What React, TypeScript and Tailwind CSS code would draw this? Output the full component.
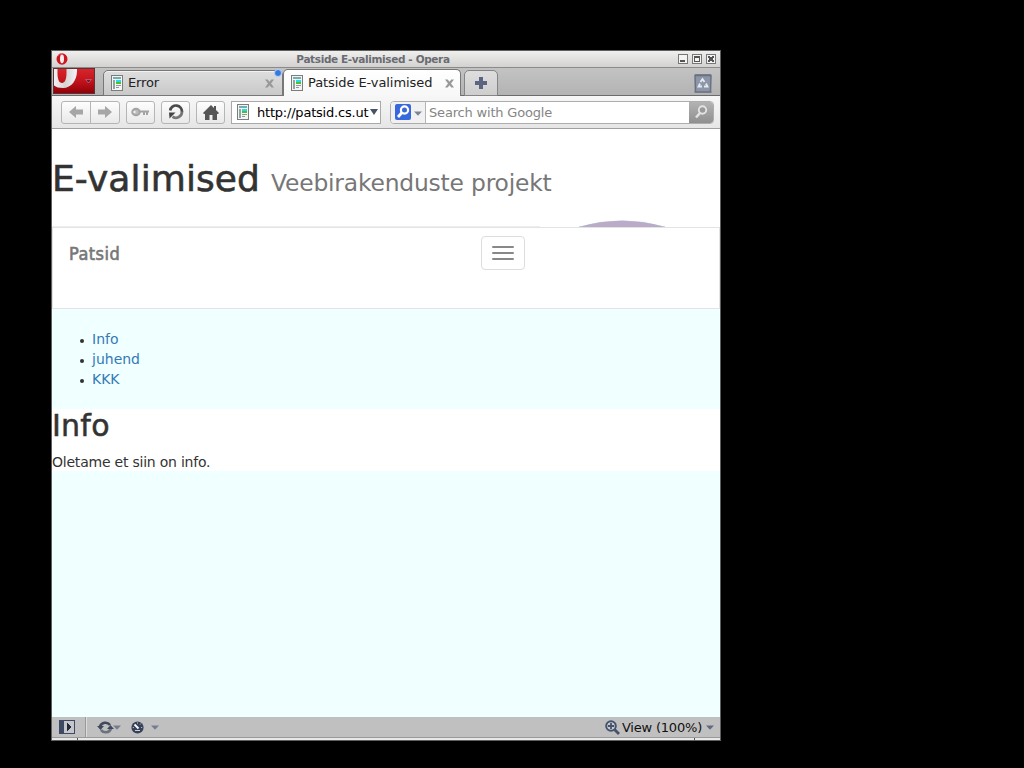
import type { ReactNode } from "react";

function PageIcon() {
  return (
    <svg width="12" height="16" viewBox="0 0 12 16" shapeRendering="crispEdges" className="shrink-0">
      <rect x="0.5" y="0.5" width="11" height="15" fill="#f4f4f4" stroke="#7c7c7c" />
      <rect x="2" y="2" width="8" height="2" fill="#6fb0b0" />
      <rect x="2" y="5" width="2" height="9" fill="#8fa5a0" />
      <rect x="5" y="5" width="5" height="2" fill="#22dcea" />
      <rect x="5" y="7" width="5" height="2" fill="#55bb35" />
      <path d="M5 10.500h5M5 12.500h3" stroke="#8a9a9a" />
    </svg>
  );
}

function Caret({ color = "#5a6378" }: { color?: string }) {
  return (
    <svg width="8" height="5" viewBox="0 0 8 5" className="shrink-0">
      <path d="M0 0.5h8L4 4.8z" fill={color} />
    </svg>
  );
}

function CloseMark() {
  return (
    <svg width="9" height="9" viewBox="0 0 9 9" className="shrink-0">
      <path d="M0 0.5h2.7l1.8 2.3 1.8-2.3H9L6 4.5l3 4H6.3L4.5 6.2 2.7 8.5H0l3-4z" fill="#989898" />
    </svg>
  );
}

function WinButton({ children }: { children: ReactNode }) {
  return (
    <svg width="10" height="10" viewBox="0 0 10 10" shapeRendering="crispEdges">
      <rect x="0.5" y="0.5" width="9" height="9" fill="#f4f4f2" stroke="#777" />
      {children}
    </svg>
  );
}

const toolButton =
  "flex h-[23px] shrink-0 items-center justify-center rounded-[3px] border border-[#b5b5b5] bg-gradient-to-b from-[#fdfdfd] to-[#e9e9e9]";

function TitleBar() {
  return (
    <div className="flex h-[17px] items-center border-b border-[#8b8b8b] bg-gradient-to-b from-[#efefed] to-[#d3d2d0] px-1">
      <svg width="12" height="12" viewBox="0 0 12 12" className="shrink-0">
        <ellipse cx="6" cy="6" rx="5.5" ry="5.8" fill="#cf1620" />
        <ellipse cx="6" cy="5.8" rx="2" ry="4.4" fill="#f6eeee" />
        <path d="M2 2.5Q3.5.5 6 .5" stroke="#f07070" fill="none" />
      </svg>
      <div className="flex-1 text-center text-[10.5px] font-bold leading-[14px] tracking-[-0.37px] text-[#696c72]">
        Patside E-valimised - Opera
      </div>
      <div className="flex gap-1">
        <WinButton><rect x="2" y="6" width="5" height="2" fill="#555" /></WinButton>
        <WinButton><path d="M2.5 3.5h5v4h-5zM2 2.5h6" fill="none" stroke="#555" /></WinButton>
        <WinButton><path d="M2 2h2v1h2V2h2v2H7v2h1v2H6V7H4v1H2V6h1V4H2z" fill="#555" /></WinButton>
      </div>
    </div>
  );
}

function TabBar() {
  return (
    <div className="flex h-7 items-start border-b border-[#6b6b6b] bg-gradient-to-b from-[#c3c3c3] to-[#b3b3b3] pl-px">
      <svg width="42" height="26" viewBox="0 0 42 26" className="shrink-0">
        <defs>
          <linearGradient id="red" x2="0" y2="1">
            <stop stopColor="#d9252c" />
            <stop offset="0.5" stopColor="#c3131c" />
            <stop offset="1" stopColor="#8f0008" />
          </linearGradient>
          <linearGradient id="silver" x2="1" y2="0">
            <stop stopColor="#f2f2f2" />
            <stop offset="0.5" stopColor="#d4d4d4" />
            <stop offset="1" stopColor="#f5f5f5" />
          </linearGradient>
        </defs>
        <rect x="0.5" y="0.5" width="41" height="25" fill="url(#red)" stroke="#5f3034" />
        <path d="M1 1h3.500v4c0 6 1.500 10 4.500 10S13.500 11 13.500 5V1H24v2c0 9-5.500 17-14 17-4 0-7-.8-9-2.500z" fill="url(#silver)" />
        <path d="M32.500 11.500h6L35.500 15z" fill="#6d1737" stroke="#b96980" strokeWidth="0.8" />
      </svg>
      <div className="relative ml-2 mt-[2px] flex h-[26px] w-[180px] items-center rounded-t-[5px] border border-[#777] bg-gradient-to-b from-[#dedede] to-[#c9c9c9] pl-[7px] pr-2 shadow-[inset_0_1px_0_#f2f2f2]">
        <PageIcon />
        <span className="ml-[5px] flex-1 text-[13px] leading-4 tracking-[-0.15px] text-[#222]">Error</span>
        <CloseMark />
        <span className="absolute right-0 -top-[2px] h-2 w-2 rounded-full border border-[#b8d2ff] bg-[#3478e0]" />
      </div>
      <div className="mt-px flex h-[27px] w-[178px] items-center rounded-t-[5px] border border-b-0 border-[#777] bg-gradient-to-b from-white to-[#f7f7f7] pl-[7px] pr-[6px]">
        <PageIcon />
        <span className="ml-[5px] flex-1 whitespace-nowrap text-[13px] leading-4 tracking-[-0.08px] text-[#222]">Patside E-valimised</span>
        <CloseMark />
      </div>
      <div className="ml-[3px] mt-[2px] flex h-[26px] w-[34px] items-center justify-center rounded-t-[5px] border border-[#858585] bg-gradient-to-b from-[#dedede] to-[#cecece]">
        <svg width="12" height="12" viewBox="0 0 12 12"><path d="M4 0h4v4h4v4H8v4H4V8H0V4h4z" fill="#5b6480" /></svg>
      </div>
      <svg width="20" height="21" viewBox="0 0 20 21" className="ml-auto mr-[7px] mt-[5px] shrink-0">
        <rect x="1" y="18" width="18" height="2" fill="#a2a2a2" />
        <path d="M2 2.500h16l-.5 16.500h-15z" fill="#8d96a8" stroke="#697282" strokeWidth="1.500" />
        <path d="M2 1.500h16" stroke="#777d87" />
        <path d="M7.500 9l2-3 2 3M13 10.500l1.500 3H11M9 13.500H5.500L7 10.500" fill="none" stroke="#e5e9ef" strokeWidth="1.800" />
      </svg>
    </div>
  );
}

function Arrow({ flip = false }: { flip?: boolean }) {
  return (
    <svg width="14" height="12" viewBox="0 0 14 12" className={flip ? "-scale-x-100" : ""}>
      <path d="M0 6l7-6v3.500h7v5H7V12z" fill="#a6a6a6" />
    </svg>
  );
}

function Toolbar() {
  return (
    <div className="flex h-[33px] items-center border-b border-[#a0a0a0] bg-gradient-to-b from-[#f7f7f7] to-[#e6e6e6] pl-[9px] pr-[6px]">
      <div className={`${toolButton} w-[59px]`}>
        <span className="flex h-full flex-1 items-center justify-center border-r border-[#b5b5b5]"><Arrow /></span>
        <span className="flex h-full flex-1 items-center justify-center"><Arrow flip /></span>
      </div>
      <div className={`${toolButton} ml-[6px] w-[29px]`}>
        <svg width="19" height="10" viewBox="0 0 19 10">
          <path d="M8 4.500h10M13 5v3M16 5v3" fill="none" stroke="#a3a3a3" strokeWidth="2" />
          <ellipse cx="5" cy="5" rx="3.700" ry="3.300" fill="#bbb" stroke="#a3a3a3" strokeWidth="2" />
          <circle cx="3.500" cy="5" r="1.200" fill="#eee" />
        </svg>
      </div>
      <div className={`${toolButton} ml-[6px] w-[29px]`}>
        <svg width="16" height="16" viewBox="0 0 16 16">
          <path d="M2.200 6.500A5.900 5.900 0 0 1 13.900 8" fill="none" stroke="#4a4a4a" strokeWidth="2.700" />
          <path d="M13.900 7.500A5.900 5.900 0 0 1 4.500 12.600" fill="none" stroke="#777" strokeWidth="2.700" />
          <path d="M1 8.500h6.500L1.500 14.500z" fill="#444" />
        </svg>
      </div>
      <div className={`${toolButton} ml-[6px] w-[29px]`}>
        <svg width="16" height="15" viewBox="0 0 16 15">
          <path d="M0 8L8 0l3 3V1h2v4l3 3-1 1h-1v6H9.500v-5h-3v5H2V9H1z" fill="#555" />
        </svg>
      </div>
      <div className="ml-[6px] flex h-[23px] w-[150px] items-center border border-[#a9a9a9] bg-white pl-[5px] pr-[3px]">
        <PageIcon />
        <span className="ml-2 mt-[2px] w-[110px] whitespace-nowrap text-[13px] leading-4 tracking-[-0.21px] text-black">http://patsid.cs.ut</span>
        <svg width="8" height="6" viewBox="0 0 8 6" className="ml-[3px] shrink-0">
          <path d="M0 0h8L4 6z" fill="#46536b" />
        </svg>
      </div>
      <div className="ml-[9px] flex h-[23px] w-[324px] items-center overflow-hidden rounded-[4px] border border-[#adadad] bg-white">
        <div className="flex h-full w-[35px] shrink-0 items-center border-r border-[#b5b5b5] bg-[#f1f1f1] pl-1">
          <svg width="16" height="16" viewBox="0 0 16 16">
            <rect width="16" height="16" rx="2" fill="#3768dc" />
            <circle cx="9.500" cy="6" r="3.600" fill="none" stroke="#fff" strokeWidth="2.200" />
            <path d="M7 8.500L3 13" stroke="#fff" strokeWidth="2.800" />
          </svg>
          <span className="ml-[3px] mt-[3px] flex"><Caret color="#7c8494" /></span>
        </div>
        <span className="mt-[2px] flex-1 pl-[3px] text-[13px] leading-4 tracking-[-0.18px] text-[#858585]">Search with Google</span>
        <div className="flex h-full w-6 items-center justify-center bg-gradient-to-b from-[#b3b3b3] to-[#8f8f8f]">
          <svg width="14" height="14" viewBox="0 0 14 14">
            <circle cx="8.500" cy="5" r="3.700" fill="#999" stroke="#e3e3e3" strokeWidth="1.900" />
            <path d="M6 8L2 12.500" stroke="#e3e3e3" strokeWidth="2.500" />
          </svg>
        </div>
      </div>
    </div>
  );
}

function Page() {
  return (
    <main className="flex h-[588px] flex-col bg-[#f0ffff] text-[#333]">
      <header className="flex h-[98px] bg-white">
        <div className="w-[488px] shrink-0 border-b border-[#eee] pt-[30px]">
          <h1 className="flex items-baseline whitespace-nowrap text-[36px] leading-[40px]">
            <span className="w-[219px] shrink-0 tracking-[0.1px] [-webkit-text-stroke:0.6px_#333]">E-valimised</span>
            <small className="shrink-0 text-[23.4px] tracking-[-0.19px] text-[#777]">Veebirakenduste projekt</small>
          </h1>
        </div>
        <svg width="88" height="7" viewBox="0 0 88 7" className="ml-[38px] self-end">
          <path d="M1 7Q44-5.500 87 7z" fill="#bda9c9" stroke="#a5b9c5" strokeWidth="0.5" />
        </svg>
      </header>
      <nav className="flex h-[82px] items-start border border-[#e3e3e3] bg-white pl-4 pt-2">
        <span className="mt-2 w-[412px] font-['DejaVu_Sans_Condensed','DejaVu_Sans',sans-serif] text-[18px] leading-5 tracking-[0.45px] text-[#777] [-webkit-text-stroke:0.6px_#777]">Patsid</span>
        <button className="flex h-[34px] w-11 flex-col items-center justify-center gap-1 rounded-[4px] border border-[#ddd]">
          <span className="h-[2px] w-[22px] rounded-[1px] bg-[#888]" />
          <span className="h-[2px] w-[22px] rounded-[1px] bg-[#888]" />
          <span className="h-[2px] w-[22px] rounded-[1px] bg-[#888]" />
        </button>
      </nav>
      <ul className="h-[100px] pt-5 text-[14px] leading-5">
        {["Info", "juhend", "KKK"].map((label) => (
          <li key={label} className="flex items-center">
            <span className="ml-7 mr-2 mt-[3px] h-1 w-1 rounded-full bg-[#333]" />
            <a className="text-[#337ab7]">{label}</a>
          </li>
        ))}
      </ul>
      <section className="h-[62px] bg-white">
        <h2 className="text-[30px] leading-[33px] tracking-[0.25px] [-webkit-text-stroke:0.5px_#333]">Info</h2>
        <p className="mt-[10px] text-[14px] leading-5 tracking-[-0.22px]">Oletame et siin on info.</p>
      </section>
    </main>
  );
}

function StatusBar() {
  return (
    <footer className="flex h-5 items-center bg-[#c0c0c0] pl-[7px] pr-[6px]">
      <svg width="16" height="14" viewBox="0 0 16 14" shapeRendering="crispEdges">
        <rect x="0.5" y="0.5" width="15" height="13" fill="#c4c6ca" stroke="#3e4963" />
        <rect x="1" y="1" width="4" height="12" fill="#3e4963" />
        <path d="M8 3v8l4-4z" fill="#232a3b" />
      </svg>
      <span className="ml-[10px] h-full w-[2px] border-l border-[#999] bg-[#ddd]" />
      <svg width="17" height="13" viewBox="0 0 17 13" className="ml-[10px]">
        <path d="M3 5.500C4.500 1 10.500.5 13 4" fill="none" stroke="#414a5d" strokeWidth="2.600" />
        <path d="M14 7.500C12.500 12 6.500 12.500 4 9" fill="none" stroke="#6b7382" strokeWidth="2.600" />
        <path d="M0 5h7L3.500 9zM10 8h7l-3.500-4z" fill="#414a5d" />
      </svg>
      <span className="-ml-px flex"><Caret color="#737d91" /></span>
      <svg width="13" height="13" viewBox="0 0 13 13" className="ml-[10px]">
        <circle cx="6.500" cy="6.500" r="6.100" fill="#364259" />
        <path d="M3.500 3.500L7.500 7.500" stroke="#fff" strokeWidth="1.800" />
        <path d="M6.500 1.500v1M1.800 6.500h1M10.200 6.500h1M9 3.500l1-1M4 9.500h5" stroke="#cbd2de" />
      </svg>
      <span className="ml-[7px] flex"><Caret color="#737d91" /></span>
      <svg width="15" height="15" viewBox="0 0 15 15" className="ml-auto">
        <circle cx="6" cy="6" r="4.800" fill="#c6ccd5" stroke="#46536b" strokeWidth="2" />
        <path d="M9.500 9.500l4.500 4.500" stroke="#46536b" strokeWidth="2.800" />
        <path d="M3 6h6M6 3v6" stroke="#46536b" strokeWidth="1.800" />
      </svg>
      <span className="ml-[2px] mt-px whitespace-nowrap text-[13px] leading-4 tracking-[-0.2px] text-[#111]">View (100%)</span>
      <span className="ml-[4px] flex"><Caret color="#5f6980" /></span>
    </footer>
  );
}

export default function App() {
  return (
    <div className="h-[768px] w-[1024px] overflow-hidden bg-black pl-[51px] pt-[50px] font-['DejaVu_Sans',sans-serif]">
      <div className="h-[691px] w-[670px] border border-[#5f5f5f] bg-white">
        <TitleBar />
        <TabBar />
        <Toolbar />
        <Page />
        <StatusBar />
        <div className="flex h-[3px] border-t border-[#999] bg-[#e8e8e8]">
          <span className="w-[26px] border-r border-[#555]" />
          <span className="w-[617px] border-r border-[#555]" />
        </div>
      </div>
    </div>
  );
}
